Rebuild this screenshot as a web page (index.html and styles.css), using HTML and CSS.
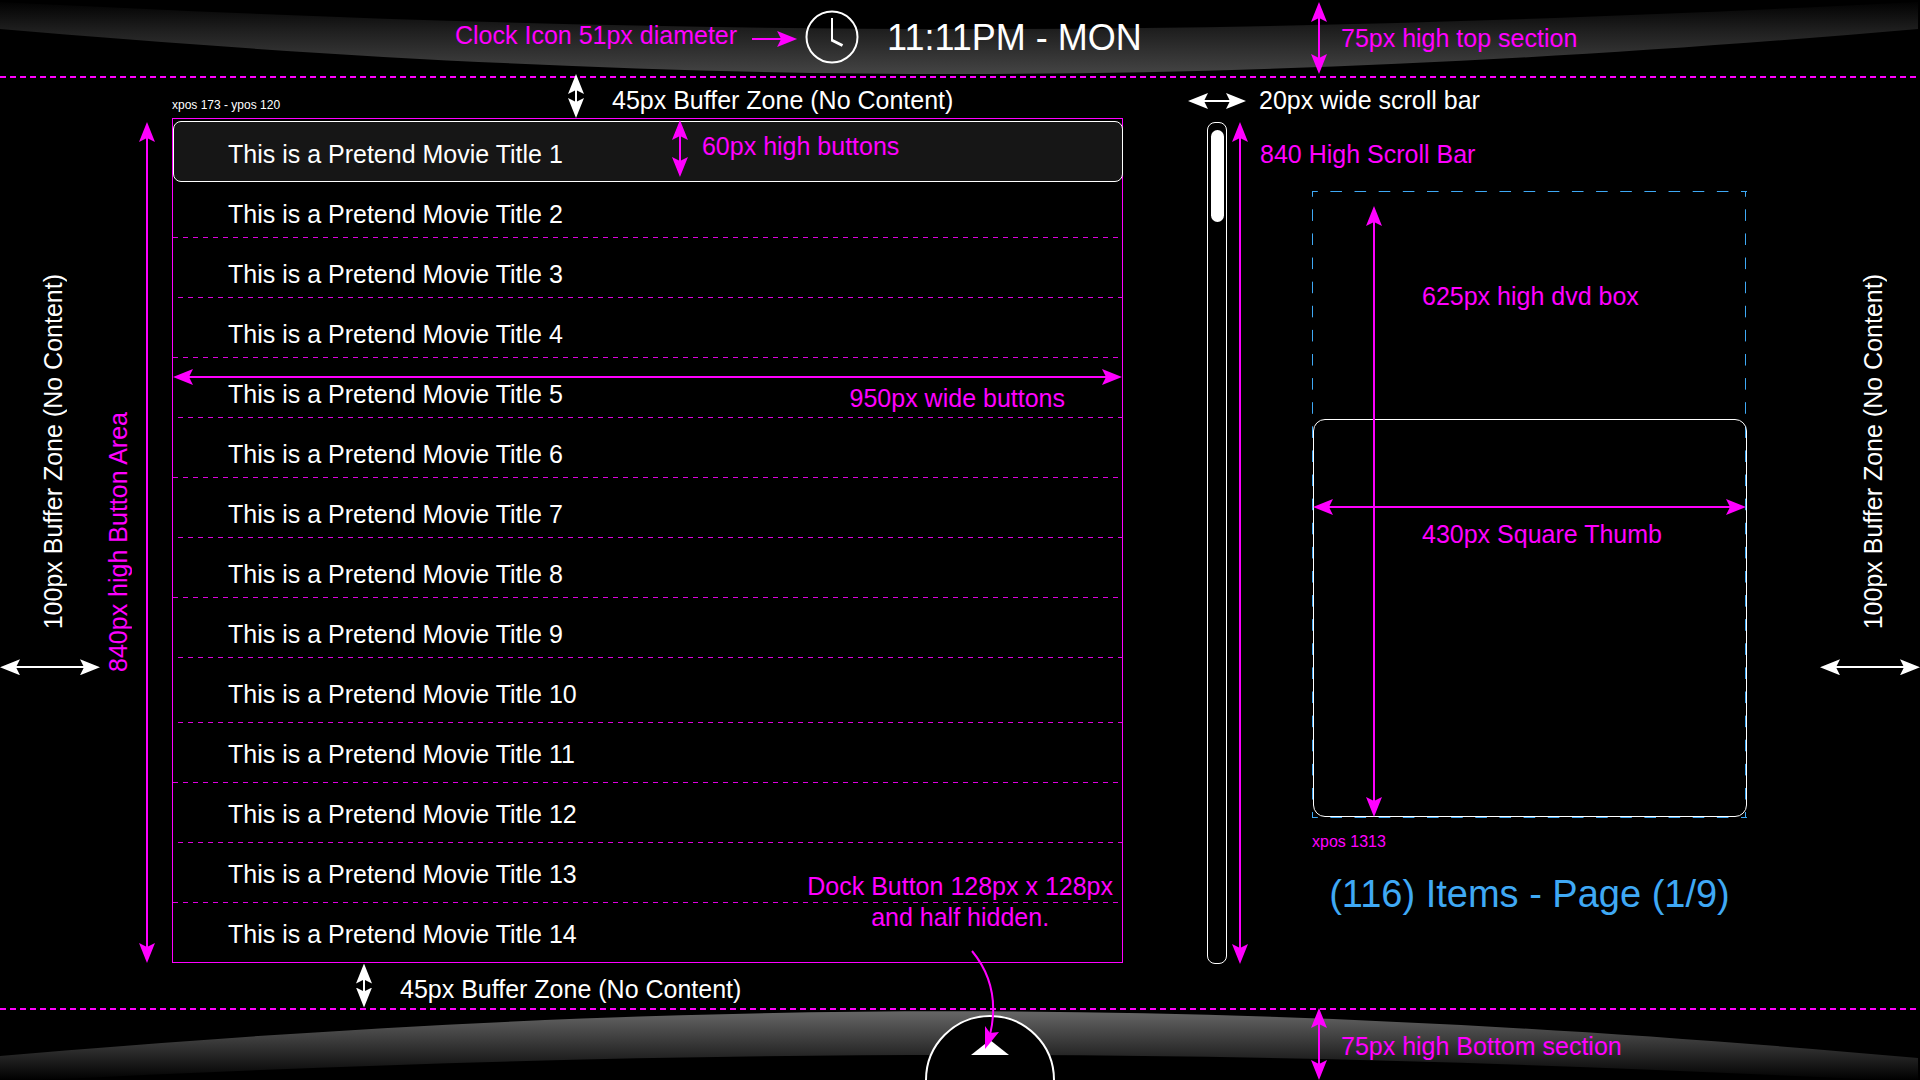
FILE: index.html
```html
<!DOCTYPE html>
<html lang="en">
<head>
<meta charset="utf-8">
<title>Movie list layout guide</title>
<link rel="stylesheet" href="styles.css">
</head>
<body>
<header class="bar bar-top">
  <svg class="swoosh" viewBox="0 0 1920 78" preserveAspectRatio="none" aria-hidden="true">
    <defs><linearGradient id="top-fade" gradientUnits="userSpaceOnUse" x1="0" y1="0" x2="0" y2="74"><stop offset="0" stop-color="#000"/><stop offset="0.4" stop-color="#1e1e1e"/><stop offset="1" stop-color="#444"/></linearGradient></defs>
    <path fill="url(#top-fade)" d="M0 2C700 38 1220 38 1918 2V29C1220 89 700 89 0 29Z"/>
  </svg>
  <div class="clock-group">
    <span class="note clock-note">Clock Icon 51px diameter</span>
    <span class="arrow arrow-h arrow-single note"></span>
    <svg class="clock" viewBox="0 0 54 54" aria-hidden="true">
      <circle cx="27" cy="27" r="25.5" fill="none" stroke="#fff" stroke-width="2"/>
      <path d="M27 8V31" fill="none" stroke="#fff" stroke-width="2"/>
      <path d="M26.500 30L37.500 35.500" fill="none" stroke="#fff" stroke-width="3"/>
    </svg>
    <time class="time">11:11PM - MON</time>
  </div>
  <div class="section-note">
    <span class="arrow arrow-v note"></span>
    <span class="note">75px high top section</span>
  </div>
</header>

<main class="stage">
  <div class="buffer buffer-top">
    <span class="position">xpos 173 - ypos 120</span>
    <span class="arrow arrow-v buffer-arrow"></span>
    <span class="label">45px Buffer Zone (No Content)</span>
  </div>
  <div class="scroll-width">
    <span class="arrow arrow-h"></span>
    <span class="label">20px wide scroll bar</span>
  </div>

  <div class="side side-left">
    <div class="edge">
      <span class="label vertical edge-label">100px Buffer Zone (No Content)</span>
      <span class="arrow arrow-h edge-arrow"></span>
    </div>
    <span class="note vertical area-label">840px high Button Area</span>
    <span class="arrow arrow-v note"></span>
  </div>

  <section class="list" aria-label="Movies">
    <ul class="rows">
      <li><button class="row row-selected" type="button">This is a Pretend Movie Title 1</button></li>
      <li><button class="row" type="button">This is a Pretend Movie Title 2</button></li>
      <li><button class="row" type="button">This is a Pretend Movie Title 3</button></li>
      <li><button class="row" type="button">This is a Pretend Movie Title 4</button></li>
      <li><button class="row" type="button">This is a Pretend Movie Title 5</button></li>
      <li><button class="row" type="button">This is a Pretend Movie Title 6</button></li>
      <li><button class="row" type="button">This is a Pretend Movie Title 7</button></li>
      <li><button class="row" type="button">This is a Pretend Movie Title 8</button></li>
      <li><button class="row" type="button">This is a Pretend Movie Title 9</button></li>
      <li><button class="row row-plain" type="button">This is a Pretend Movie Title 10</button></li>
      <li><button class="row row-lower" type="button">This is a Pretend Movie Title 11</button></li>
      <li><button class="row row-lower" type="button">This is a Pretend Movie Title 12</button></li>
      <li><button class="row row-lower" type="button">This is a Pretend Movie Title 13</button></li>
      <li><button class="row row-lower" type="button">This is a Pretend Movie Title 14</button></li>
    </ul>
    <div class="button-height note"><span class="arrow arrow-v"></span><span class="button-height-text">60px high buttons</span></div>
    <div class="button-width note"><span class="arrow arrow-h"></span><span class="button-width-text">950px wide buttons</span></div>
    <p class="dock-note note">Dock Button 128px x 128px<br>and half hidden.</p>
  </section>

  <div class="scroll">
    <div class="track"><div class="thumb"></div></div>
    <span class="arrow arrow-v note scroll-arrow"></span>
    <span class="note scroll-label">840 High Scroll Bar</span>
  </div>

  <section class="preview" aria-label="Preview">
    <div class="dvd">
      <div class="square"></div>
      <span class="arrow arrow-v note dvd-arrow"></span>
      <span class="note dvd-label">625px high dvd box</span>
      <span class="arrow arrow-h note square-arrow"></span>
      <span class="note square-label">430px Square Thumb</span>
    </div>
    <span class="note preview-position">xpos 1313</span>
    <p class="count">(116) Items - Page (1/9)</p>
  </section>

  <div class="side side-right">
    <div class="edge">
      <span class="label vertical edge-label">100px Buffer Zone (No Content)</span>
      <span class="arrow arrow-h edge-arrow"></span>
    </div>
  </div>

  <div class="buffer buffer-bottom">
    <span class="arrow arrow-v buffer-arrow"></span>
    <span class="label">45px Buffer Zone (No Content)</span>
  </div>
</main>

<footer class="bar bar-bottom">
  <svg class="swoosh" viewBox="0 0 1920 72" preserveAspectRatio="none" aria-hidden="true">
    <defs><linearGradient id="bottom-fade" gradientUnits="userSpaceOnUse" x1="0" y1="2" x2="0" y2="72"><stop offset="0" stop-color="#686868"/><stop offset="0.64" stop-color="#262626"/><stop offset="1" stop-color="#000"/></linearGradient></defs>
    <path fill="url(#bottom-fade)" d="M0 48C700 -12 1220 -12 1918 50V74C1220 38 700 38 0 74Z"/>
  </svg>
  <div class="dock-window">
    <button class="dock" type="button" aria-label="Open dock">
      <svg class="dock-icon" viewBox="0 0 38 15" aria-hidden="true"><path fill="#fff" d="M0 15L19 0L38 15Z"/></svg>
    </button>
  </div>
  <svg class="dock-pointer" viewBox="0 0 40 102" aria-hidden="true">
    <path d="M7 2C26 25 33 52 25 86" fill="none" stroke="#f0f" stroke-width="2"/>
    <path d="M20 100V77L25 84L34 83Z" fill="#f0f"/>
  </svg>
  <div class="section-note">
    <span class="arrow arrow-v note"></span>
    <span class="note">75px high Bottom section</span>
  </div>
</footer>
</body>
</html>
```
FILE: styles.css
```css
:root {
  --guide: #f0f;
  --accent: #3fa9f5;
}

* { box-sizing: border-box; }

body {
  margin: 0;
  min-height: 100vh;
  display: flex;
  flex-direction: column;
  overflow-x: hidden;
  background: #000;
  color: #fff;
  font: 25px/30px "Liberation Sans", Arial, sans-serif;
}

p, ul { margin: 0; padding: 0; }
.note { color: var(--guide); white-space: nowrap; }
.label { white-space: nowrap; }
.vertical { writing-mode: vertical-rl; transform: rotate(180deg); }

/* Measuring arrows: a line with a notched head at each end */
.arrow { position: relative; flex: none; display: block; }
.arrow::before, .arrow::after { content: ""; position: absolute; background: currentColor; }
.arrow-v { width: 16px; background: linear-gradient(currentColor, currentColor) center / 2px calc(100% - 16px) no-repeat; }
.arrow-v::before, .arrow-v::after { left: 0; width: 16px; height: 20px; }
.arrow-v::before { top: 0; clip-path: polygon(50% 0, 100% 100%, 50% 80%, 0 100%); }
.arrow-v::after { bottom: 0; clip-path: polygon(50% 100%, 100% 0, 50% 20%, 0 0); }
.arrow-h { height: 16px; background: linear-gradient(currentColor, currentColor) center / calc(100% - 16px) 2px no-repeat; }
.arrow-h::before, .arrow-h::after { top: 0; width: 20px; height: 16px; }
.arrow-h::before { left: 0; clip-path: polygon(0 50%, 100% 0, 80% 50%, 100% 100%); }
.arrow-h::after { right: 0; clip-path: polygon(100% 50%, 0 0, 20% 50%, 0 100%); }
.arrow-single { width: 45px; background-position: left center; }
.arrow-single::before { display: none; }

/* Top and bottom bars */
.bar {
  position: relative;
  display: grid;
  grid-template-columns: minmax(0, 1311fr) minmax(0, 609fr);
}
.bar::after {
  content: "";
  position: absolute;
  left: 0;
  right: 0;
  height: 2px;
  background: repeating-linear-gradient(90deg, var(--guide) 0 6px, transparent 6px 10px);
}
.bar-top { height: 78px; }
.bar-top::after { bottom: 0; }
.bar-bottom { height: 72px; }
.bar-bottom::after { top: 0; }
.swoosh { position: absolute; inset: 0; width: 100%; height: 100%; overflow: hidden; }
.clock-group {
  position: relative;
  display: flex;
  align-items: center;
  padding: 0 0 4px 455px;
  white-space: nowrap;
}
.clock-note { padding-bottom: 4px; }
.clock-group .arrow { margin: 4px 8px 0 15px; }
.clock { width: 54px; height: 54px; flex: none; }
.time { margin-left: 28px; padding-top: 2px; font-size: 36px; line-height: 42px; }
.section-note { position: relative; grid-column: 2; display: flex; align-items: center; gap: 14px; }
.section-note .arrow { height: 72px; }
.bar-top .section-note { padding-bottom: 2px; }
.bar-bottom .section-note .note:last-child { padding-top: 4px; }

/* Stage between the bars */
.stage {
  flex: 1;
  display: grid;
  grid-template-columns: 172px minmax(0, 951fr) 189px minmax(0, 435fr) 173px;
  grid-template-rows: 40px 1fr 45px;
}
.buffer { grid-column: 2; display: flex; align-items: center; }
.buffer-top { grid-row: 1; }
.buffer-top .label { padding-top: 4px; }
.position { width: 396px; padding-top: 14px; font-size: 12px; line-height: 16px; white-space: nowrap; }
.buffer-arrow { height: 44px; margin-right: 28px; }
.buffer-top .buffer-arrow { align-self: flex-end; }
.buffer-bottom { grid-row: 3; padding-left: 184px; }
.buffer-bottom .label { padding-top: 6px; }
.scroll-width { grid-area: 1 / 3 / 2 / 5; display: flex; align-items: center; gap: 13px; padding: 4px 0 0 65px; }
.scroll-width .arrow { width: 58px; margin-top: 2px; }

.side { grid-row: 2; display: flex; }
.side-left { grid-column: 1; }
.side-right { grid-column: 5; justify-content: flex-end; }
.side > .arrow { margin: 4px 0 0 6px; }
.edge { width: 100px; display: flex; flex-direction: column; align-items: center; padding-top: 156px; }
.edge-label { width: 30px; margin-left: 6px; }
.edge-arrow { width: 100px; margin-top: 30px; }
.area-label { width: 30px; align-self: flex-start; margin: 294px 0 0 3px; }

/* Movie list */
.list { grid-area: 2 / 2; position: relative; border: 1px solid var(--guide); }
.rows { list-style: none; padding-top: 2px; }
.row {
  display: block;
  width: 100%;
  height: 60px;
  padding: 4px 0 0 55px;
  border: 0;
  background: repeating-linear-gradient(90deg, #d0d 0 5px, transparent 5px 10px) 0 55px / 100% 1px no-repeat;
  color: inherit;
  font: inherit;
  text-align: left;
}
.rows li:nth-child(odd) .row { background-position-x: 5px; }
.row.row-selected {
  width: calc(100% + 1px);
  height: 61px;
  padding-left: 54px;
  border: 1px solid #fff;
  border-radius: 8px;
  background: #161616;
}
.row.row-plain { background: none; }
.row.row-lower { background-position-y: 0; }

.button-height { position: absolute; left: calc(53% - 4px); top: 1px; display: flex; gap: 14px; }
.button-height .arrow { height: 57px; }
.button-height-text { padding-top: 11px; }
.button-width { position: absolute; left: 0; right: 0; top: 250px; }
.button-width-text { display: block; margin-top: -2px; padding-right: 57px; text-align: right; }
.dock-note { position: absolute; right: 9px; bottom: 29px; line-height: 31px; text-align: center; }

/* Scroll bar */
.scroll { grid-area: 2 / 3; display: flex; padding: 4px 0 0 84px; margin-bottom: -1px; }
.track { flex: none; width: 20px; padding: 7px 3px; border: 1px solid #fff; border-radius: 8px; }
.thumb { height: 92px; margin: 0 -1px 0 0; border-radius: 7px; background: #fff; }
.scroll-arrow { margin: 0 12px 0 5px; }
.scroll-label { padding-top: 17px; }

/* Preview */
.preview { grid-area: 2 / 4; padding-top: 73px; }
.dvd {
  position: relative;
  height: 627px;
  display: flex;
  align-items: flex-end;
  padding: 0 0 1px 1px;
  --dash-x: linear-gradient(90deg, var(--accent) 25%, transparent 25% 75%, var(--accent) 75%);
  --dash-y: linear-gradient(var(--accent) 25%, transparent 25% 75%, var(--accent) 75%);
  background:
    var(--dash-x) left top / 24px 1px round no-repeat,
    var(--dash-x) left bottom / 24px 1px round no-repeat,
    var(--dash-y) left top / 1px 24px no-repeat round,
    var(--dash-y) right 1px top / 1px 24px no-repeat round;
}
.square { width: 100%; height: 398px; border: 1px solid #fff; border-radius: 12px; }
.dvd-arrow { position: absolute; left: 54px; top: 15px; bottom: 1px; }
.square-arrow { position: absolute; left: 1px; right: 1px; top: 308px; }
.dvd-label { position: absolute; left: 110px; top: 90px; }
.square-label { position: absolute; left: 110px; top: 328px; }
.preview-position { display: block; margin-top: 14px; font-size: 16px; line-height: 20px; }
.count { margin-top: 21px; color: var(--accent); font-size: 38px; line-height: 42px; text-align: center; white-space: nowrap; }

/* Dock button, lower half below the page edge */
.dock-window {
  position: absolute;
  left: calc(50% - 35px);
  bottom: 0;
  width: 130px;
  height: 65px;
  overflow: hidden;
}
.dock {
  width: 130px;
  height: 130px;
  padding: 23px 0 0;
  display: flex;
  justify-content: center;
  align-items: flex-start;
  border: 2px solid #fff;
  border-radius: 50%;
  background: #000;
}
.dock-icon { width: 38px; height: 15px; flex: none; }
.dock-pointer { position: absolute; left: calc(50% + 5px); top: -59px; width: 40px; height: 102px; }
```
